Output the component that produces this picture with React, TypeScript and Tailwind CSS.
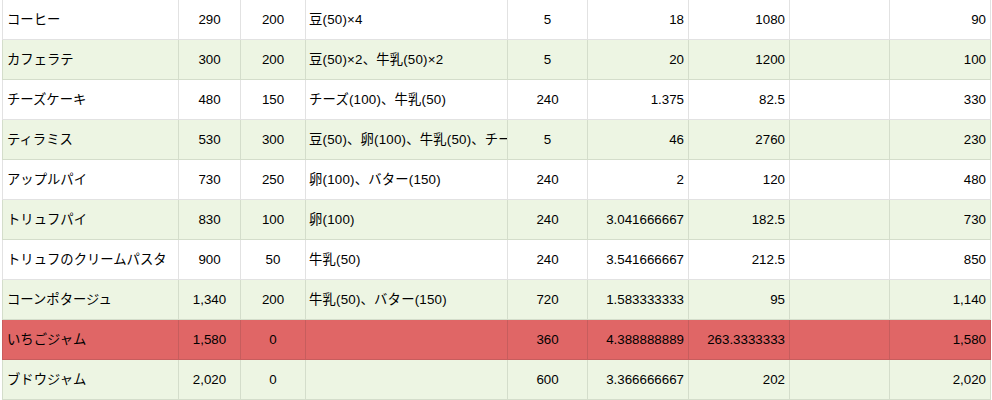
import React from "react";

type Row = { c: string[]; tone: "w" | "g" | "r" };

const rows: Row[] = [
  { c: ["コーヒー", "290", "200", "豆(50)×4", "5", "18", "1080", "", "90"], tone: "w" },
  { c: ["カフェラテ", "300", "200", "豆(50)×2、牛乳(50)×2", "5", "20", "1200", "", "100"], tone: "g" },
  { c: ["チーズケーキ", "480", "150", "チーズ(100)、牛乳(50)", "240", "1.375", "82.5", "", "330"], tone: "w" },
  { c: ["ティラミス", "530", "300", "豆(50)、卵(100)、牛乳(50)、チーズ(100)", "5", "46", "2760", "", "230"], tone: "g" },
  { c: ["アップルパイ", "730", "250", "卵(100)、バター(150)", "240", "2", "120", "", "480"], tone: "w" },
  { c: ["トリュフパイ", "830", "100", "卵(100)", "240", "3.041666667", "182.5", "", "730"], tone: "g" },
  { c: ["トリュフのクリームパスタ", "900", "50", "牛乳(50)", "240", "3.541666667", "212.5", "", "850"], tone: "w" },
  { c: ["コーンポタージュ", "1,340", "200", "牛乳(50)、バター(150)", "720", "1.583333333", "95", "", "1,140"], tone: "g" },
  { c: ["いちごジャム", "1,580", "0", "", "360", "4.388888889", "263.3333333", "", "1,580"], tone: "r" },
  { c: ["ブドウジャム", "2,020", "0", "", "600", "3.366666667", "202", "", "2,020"], tone: "g" },
];

const widths = [
  "w-[176px]",
  "w-[62px]",
  "w-[65px]",
  "w-[202px]",
  "w-[80px]",
  "w-[101px]",
  "w-[101px]",
  "w-[100px]",
  "w-[101px]",
];

const aligns = [
  "justify-start pl-[4px]",
  "justify-center",
  "justify-center",
  "justify-start pl-[3px] tracking-[0.2px]",
  "justify-center",
  "justify-end pr-[4px]",
  "justify-end pr-[4px]",
  "justify-end pr-[4px]",
  "justify-end pr-[4px]",
];

const toneRow = {
  w: "bg-white border-[#e2e2e2]",
  g: "bg-[#edf5e3] border-[#d4ddcb]",
  r: "bg-[#e06666] border-[#c75d5d]",
};

export default function App() {
  return (
    <div
      className="w-[992px] h-[400px] bg-white overflow-hidden text-[13.33px] text-black"
      style={{ fontFamily: '"Liberation Sans", Arial, "Noto Sans CJK JP", sans-serif' }}
    >
      <div className="ml-[2px] w-[989px] flex flex-col">
        {rows.map((r, i) => (
          <div key={i} className={`flex h-[40px] border-l border-b ${toneRow[r.tone]}`}>
            {r.c.map((t, j) => (
              <div
                key={j}
                className={`${widths[j]} ${aligns[j]} shrink-0 flex items-center border-r ${toneRow[r.tone]} overflow-hidden whitespace-nowrap`}
              >
                {t}
              </div>
            ))}
          </div>
        ))}
      </div>
    </div>
  );
}
